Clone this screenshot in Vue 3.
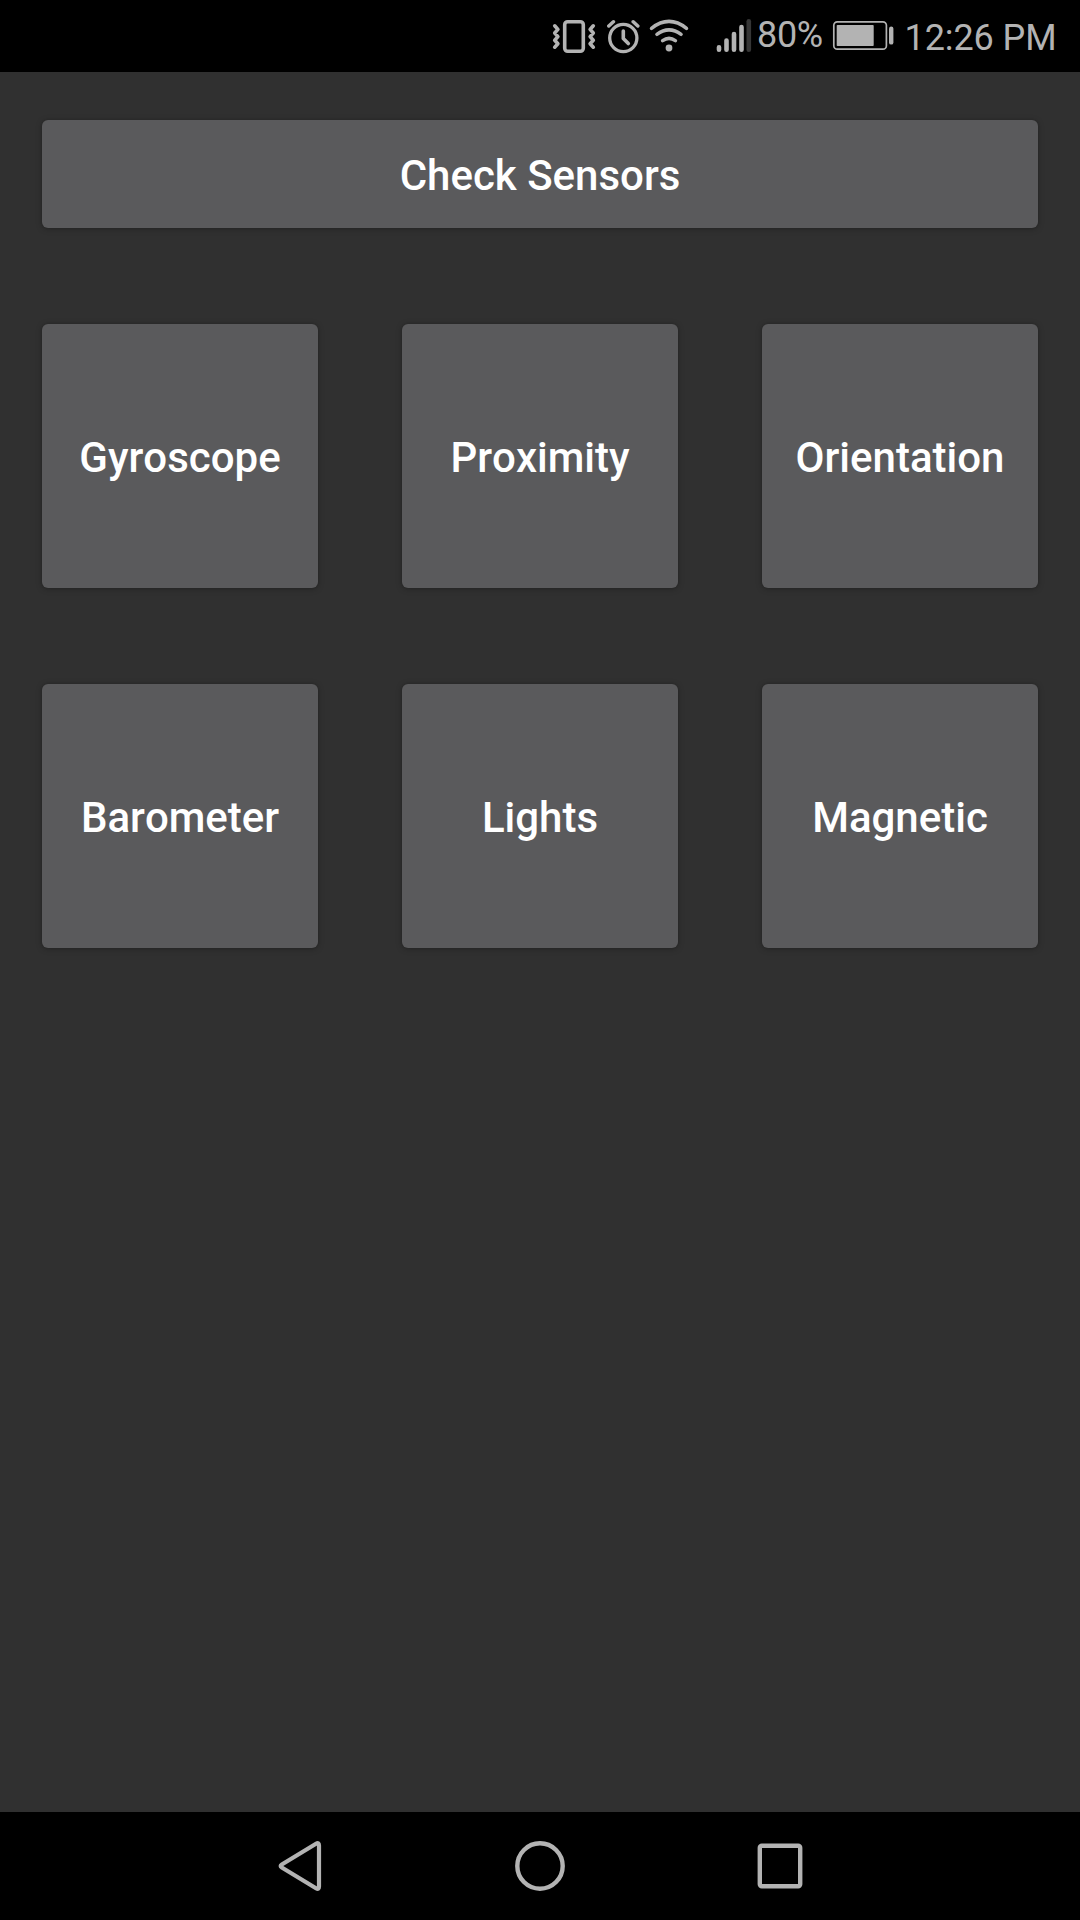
<script setup>
const sensors = ['Gyroscope', 'Proximity', 'Orientation', 'Barometer', 'Lights', 'Magnetic']
</script>

<template>
  <div class="screen">
    <header class="status">
      <svg class="vibrate" width="44" height="72" viewBox="552 0 44 72">
        <rect x="564.7" y="21.7" width="18.6" height="29.6" rx="3" stroke-width="3.6" />
        <path d="M554.7 25.8l3.2 3.6-3.2 3.6 3.2 3.6-3.2 3.6 3.2 3.6-3.2 3.4M593.3 25.8l-3.2 3.6 3.2 3.6-3.2 3.6 3.2 3.6-3.2 3.6 3.2 3.4" stroke-width="3.6" />
      </svg>
      <svg class="alarm" width="34" height="72" viewBox="606 0 34 72">
        <circle cx="623.3" cy="38" r="13.6" stroke-width="3.3" />
        <path d="M623.3 31v7.6l5 5" stroke-width="3.6" />
        <path d="M608.8 26l4.6-4.2M637.8 26l-4.6-4.2" stroke-width="3.5" />
      </svg>
      <svg class="wifi" width="40" height="72" viewBox="649 0 40 72">
        <path d="M651.5 28.3Q669 14.5 686.5 28.3M656.9 34.3Q669 25.5 681.1 34.3M662.6 40.7Q669 36 675.4 40.7" stroke-width="3.5" />
        <circle class="solid" cx="669" cy="48" r="3.4" />
      </svg>
      <svg class="signal" width="36" height="72" viewBox="716 0 36 72">
        <path d="M719 47.3v2.4M726.5 40.5v9.2M734 34v15.7M741.5 27v22.7" stroke-width="4.6" />
        <path class="dim" d="M748.8 21.3v28.4" stroke-width="4.6" />
      </svg>
      <span class="percent">80%</span>
      <svg class="battery" width="62" height="72" viewBox="832 0 62 72">
        <rect x="833.8" y="21.8" width="52.6" height="27.4" rx="3.5" stroke-width="1.7" />
        <rect class="solid" x="836.7" y="25" width="37" height="21" rx="0.8" />
        <path d="M891.2 28.8v13.6" stroke-width="4.4" />
      </svg>
      <span class="time">12:26 PM</span>
    </header>

    <main class="content">
      <button class="btn check">Check Sensors</button>
      <div class="grid">
        <button v-for="name in sensors" :key="name" class="btn">{{ name }}</button>
      </div>
    </main>

    <nav class="nav">
      <svg width="60" height="60" viewBox="0 0 60 60">
        <path d="M49 30V9.5Q49 6 46 7.8L11.8 28.5Q9.5 30 11.8 31.5L46 52.2Q49 54 49 50.5Z" stroke-width="4.2" />
      </svg>
      <svg width="60" height="60" viewBox="0 0 60 60">
        <circle cx="30" cy="30" r="22.7" stroke-width="4.4" />
      </svg>
      <svg width="60" height="60" viewBox="0 0 60 60">
        <rect x="9.8" y="9.8" width="40.4" height="40.4" rx="2" stroke-width="4.4" />
      </svg>
    </nav>
  </div>
</template>

<style>
body {
  margin: 0;
  background: #303030;
}
</style>

<style scoped>
.screen {
  display: flex;
  flex-direction: column;
  width: 1080px;
  height: 1920px;
  background: #303030;
  font-family: Roboto, sans-serif;
  font-kerning: none;
  overflow: hidden;
}
svg {
  display: block;
  flex: none;
  fill: none;
  stroke: #b3b3b3;
  stroke-linecap: round;
  stroke-linejoin: round;
}
.solid {
  fill: #b3b3b3;
  stroke: none;
}
.dim {
  stroke: #363636;
}
.status {
  display: flex;
  height: 72px;
  flex: none;
  padding-left: 552px;
  background: #000;
  color: #b3b3b3;
  font-size: 36px;
  white-space: nowrap;
}
.alarm {
  margin-left: 10px;
}
.wifi {
  margin-left: 9px;
}
.signal {
  margin-left: 27px;
}
.percent {
  width: 75px;
  margin-left: 5px;
  line-height: 71px;
  letter-spacing: -0.3px;
}
.time {
  margin-left: 10.6px;
  line-height: 77px;
  letter-spacing: -0.1px;
}
.content {
  flex: 1;
  padding: 48px 42px 0;
}
.btn {
  display: flex;
  align-items: center;
  justify-content: center;
  height: 264px;
  padding: 2px 0 0;
  border: 0;
  border-radius: 6px;
  background: #5a5a5c;
  color: #fff;
  font: 500 42px/49px Roboto, sans-serif;
  font-kerning: none;
  box-shadow: 0 1px 6px rgba(0, 0, 0, 0.25), 0 0 2px rgba(0, 0, 0, 0.15);
}
.check {
  width: 100%;
  height: 108px;
}
.grid {
  display: grid;
  grid-template-columns: repeat(3, 276px);
  gap: 96px 84px;
  margin-top: 96px;
}
.nav {
  display: flex;
  align-items: center;
  justify-content: center;
  gap: 180px;
  height: 108px;
  flex: none;
  background: #000;
}
</style>
